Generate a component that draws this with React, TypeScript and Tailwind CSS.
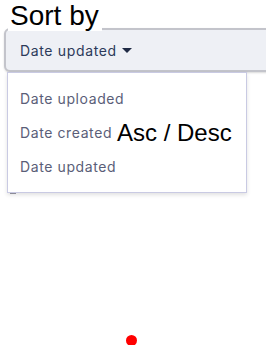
import React from "react";

export default function App() {
  return (
    <div className="relative w-[266px] h-[345px] overflow-hidden bg-white">
      <div className="flex flex-col">
        <div className="relative z-10 ml-[8px] w-fit bg-white pl-[2px] pr-[3px] text-[28px] leading-[31px] text-black font-['Liberation_Sans',Arial,sans-serif]">
          Sort by
        </div>
        <div className="ml-[4px] -mt-[3px] flex h-[44px] w-[290px] items-center rounded-l-[6px] border-2 border-[#c3c4cb] bg-[#eef0f5] pl-[14px] shadow-[0_1px_2px_rgba(0,0,0,0.15)]">
          <span className="text-[14px] tracking-[0.65px] text-[#2c3a5a] font-['Inter',sans-serif]">Date updated</span>
          <svg width="10" height="6" viewBox="0 0 10 6" className="ml-[5px] mt-[1px]">
            <path d="M0 0 L10 0 L5 5 Z" fill="#1f2a44" />
          </svg>
        </div>
      </div>

      <div className="absolute left-[7px] top-[72px] z-20 flex h-[121px] w-[240px] flex-col border border-[#c9cae3] bg-white pl-[12px] pt-[16px] shadow-[0_2px_4px_rgba(0,0,0,0.12)] font-['Inter',sans-serif] text-[14px] tracking-[0.6px] text-[#5a5e78]">
        <div className="h-[34px] leading-[20px]">Date uploaded</div>
        <div className="h-[34px] leading-[20px]">Date created</div>
        <div className="h-[34px] leading-[20px]">Date updated</div>
      </div>

      <div className="absolute left-[10px] top-[192px] h-[2px] w-[6px] bg-[#9a9aa6]" />

      <div className="absolute left-[117px] top-[119px] z-30 text-[24px] leading-[28px] text-black font-['Liberation_Sans',Arial,sans-serif]">
        Asc / Desc
      </div>

      <div className="absolute left-[126px] top-[335px] h-[11px] w-[11px] rounded-full bg-[#ff0000]" />
    </div>
  );
}
